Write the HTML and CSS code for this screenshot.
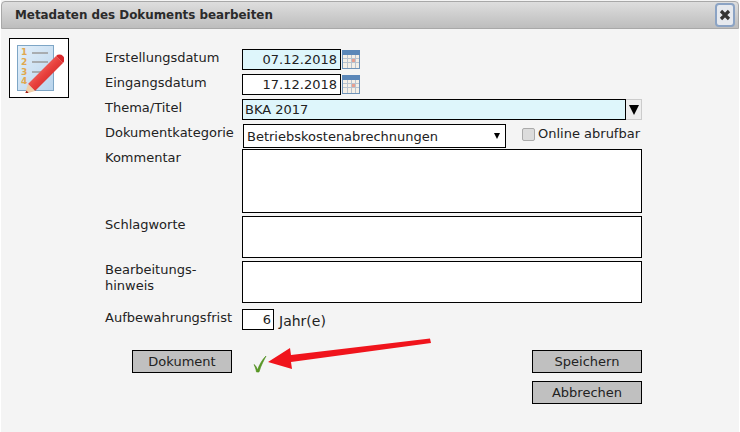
FILE: index.html
```html
<!DOCTYPE html>
<html lang="de">
<head>
<meta charset="utf-8">
<title>Metadaten</title>
<link rel="stylesheet" href="styles.css">
</head>
<body>
<div class="dialog">
  <header class="titlebar">
    <span class="title">Metadaten des Dokuments bearbeiten</span>
    <button class="close" aria-label="Schließen">
      <svg width="12" height="12" viewBox="0 0 12 12"><path d="M2 2l8 8M10 2l-8 8" stroke="#333" stroke-width="3.200" fill="none"/></svg>
    </button>
  </header>
  <div class="content">
    <div class="iconbox">
      <svg width="50" height="50" viewBox="0 0 50 50">
        <defs>
          <linearGradient id="page" x1="0" y1="0" x2="1" y2="1"><stop offset="0" stop-color="#e4f0fa"/><stop offset="1" stop-color="#b9d4ec"/></linearGradient>
          <linearGradient id="pen" x1="0" y1="0" x2="1" y2="1"><stop offset="0" stop-color="#f9a69c"/><stop offset="0.5" stop-color="#e8403c"/><stop offset="1" stop-color="#b8141a"/></linearGradient>
        </defs>
        <rect x="3.500" y="2.500" width="36" height="45" fill="url(#page)" stroke="#7ea6c6"/>
        <text class="nums" x="7" y="12">1</text>
        <text class="nums" x="7" y="22">2</text>
        <text class="nums" x="7" y="32">3</text>
        <text class="nums" x="7" y="41">4</text>
        <path d="M18 10h16M18 19h16M18 29h10M18 38h6" stroke="#9a9a9a" stroke-width="1.600"/>
        <path d="M14 41L42 13l7 7-28 28z" fill="url(#pen)"/>
        <path d="M42 13a4 4 0 0 1 7 7z" fill="#d8262a"/>
        <path d="M14 41l7 7-10 3z" fill="#f0cfa8"/>
        <path d="M12.500 47.500L11 51l3.500-1.200z" fill="#a01818"/>
      </svg>
    </div>
    <form class="form">
      <div class="row r1">
        <label class="lbl">Erstellungsdatum</label>
        <div class="val date tint">07.12.2018</div>
        <svg class="cal" width="20" height="21" viewBox="0 0 20 21"><rect x="1.500" y="1.500" width="17" height="18" fill="#f5efe6" stroke="#6f93b8"/><rect x="1" y="1" width="18" height="5" fill="#5b87b8"/><path d="M2 9.500h16M2 13.500h16M6.500 6v13M10.500 6v13M14.500 6v13" stroke="#b9c3cf"/><path d="M11 10h3v3h-3z" fill="#e8a090"/></svg>
      </div>
      <div class="row r2">
        <label class="lbl">Eingangsdatum</label>
        <div class="val date">17.12.2018</div>
        <svg class="cal" width="20" height="21" viewBox="0 0 20 21"><rect x="1.500" y="1.500" width="17" height="18" fill="#f5efe6" stroke="#6f93b8"/><rect x="1" y="1" width="18" height="5" fill="#5b87b8"/><path d="M2 9.500h16M2 13.500h16M6.500 6v13M10.500 6v13M14.500 6v13" stroke="#b9c3cf"/><path d="M11 10h3v3h-3z" fill="#e8a090"/></svg>
      </div>
      <div class="row r3">
        <label class="lbl">Thema/Titel</label>
        <div class="val theme tint">BKA 2017</div>
        <div class="drop"><span class="tri"></span></div>
      </div>
      <div class="row r4">
        <label class="lbl">Dokumentkategorie</label>
        <div class="val select"><span>Betriebskostenabrechnungen</span><span class="tri small"></span></div>
        <span class="check"></span>
        <span class="online">Online abrufbar</span>
      </div>
      <div class="row r5">
        <label class="lbl">Kommentar</label>
        <div class="val area h64"></div>
      </div>
      <div class="row r6">
        <label class="lbl">Schlagworte</label>
        <div class="val area h42"></div>
      </div>
      <div class="row r7">
        <label class="lbl">Bearbeitungs-<br>hinweis</label>
        <div class="val area h42"></div>
      </div>
      <div class="row r8">
        <label class="lbl">Aufbewahrungsfrist</label>
        <div class="val num">6</div>
        <span class="unit">Jahr(e)</span>
      </div>
      <div class="actions">
        <button type="button" class="btn doc">Dokument</button>
        <svg class="ok" width="14" height="18" viewBox="0 0 14 18"><path d="M1 9.500c1.500 1 2.500 2.500 3.500 5.500C6.500 9.500 9 5 13 1c-2 4-5 9-7 16H3.500C3 14 2 11.500 1 9.500z" fill="#5a9a22" stroke="#4a8a1c" stroke-width="0.600"/></svg>
        <div class="right">
          <button type="button" class="btn wide">Speichern</button>
          <button type="button" class="btn wide">Abbrechen</button>
        </div>
      </div>
    </form>
  </div>
  <svg class="arrow" width="170" height="40" viewBox="0 0 170 40"><path d="M163 2.500L24 19l-1-7L1 26l24 7-1-7L164 7z" fill="#f0141c"/></svg>
</div>
</body>
</html>
```
FILE: styles.css
```css
* { box-sizing: border-box; }
html, body { margin: 0; height: 100%; background: #fff; }
body { font-family: "DejaVu Sans", Verdana, sans-serif; font-size: 13px; color: #222; overflow: hidden; }
.dialog { position: relative; width: 738px; height: 432px; margin-left: 1px; padding-top: 1px; background: #f4f4f4; }
.titlebar { height: 28px; display: flex; align-items: center; justify-content: space-between; padding: 0 3px 0 13px; border: 1px solid #a8a8a8; border-radius: 4px 4px 0 0; background: linear-gradient(#dedede, #bdbdbd); }
.title { font-weight: bold; font-size: 11.900px; color: #2b2b2b; }
.close { width: 20px; height: 24px; padding: 0; display: flex; align-items: center; justify-content: center; background: #e6e9ee; border: 2px solid #8ba3c4; border-radius: 4px; }
.content { display: flex; padding: 9px 0 0 8px; }
.iconbox { width: 60px; height: 60px; border: 1px solid #000; background: #fff; display: flex; align-items: center; justify-content: center; flex: none; }
.nums { font: bold 9px "DejaVu Sans", sans-serif; fill: #e0a850; }
.form { margin: 11px 0 0 36px; width: 537px; }
.row { display: flex; align-items: flex-start; }
.lbl { width: 137px; flex: none; line-height: 16px; padding-top: 1px; }
.val { border: 1px solid #000; background: #fff; }
.tint { background: #def6fb; }
.date { width: 99px; height: 21px; line-height: 20px; text-align: right; padding-right: 3px; }
.cal { flex: none; }
.r2, .r3 { margin-top: 4px; }
.r3 .val { width: 384px; height: 21px; line-height: 20px; padding-left: 2px; }
.drop { width: 16px; height: 21px; background: #eee; border: 1px solid #ccc; border-left: 0; display: flex; align-items: center; justify-content: center; }
.tri { width: 0; height: 0; border-left: 5px solid transparent; border-right: 5px solid transparent; border-top: 10px solid #000; }
.tri.small { border-left-width: 3.500px; border-right-width: 3.500px; border-top-width: 6px; margin-right: 5px; }
.r4 { margin-top: 4px; height: 25px; }
.select { width: 263px; height: 24px; margin-left: 1px; display: flex; align-items: center; justify-content: space-between; padding-left: 3px; }
.check { width: 13px; height: 13px; margin: 4px 3px 0 16px; border: 1px solid #aaa; border-radius: 2px; background: #dcdcdc; flex: none; }
.online { line-height: 20px; white-space: nowrap; }
.r5 { margin-top: 0; }
.r6, .r7 { margin-top: 3px; }
.area { width: 400px; }
.h64 { height: 64px; }
.h42 { height: 42px; }
.r8 { margin-top: 6px; }
.num { width: 32px; height: 21px; line-height: 20px; text-align: right; padding-right: 2px; }
.unit { margin-left: 5px; line-height: 24px; font-size: 14px; }
.actions { display: flex; align-items: flex-start; margin-top: 17px; padding-left: 27px; }
.btn { font: inherit; color: #222; background: #c0c0c0; border: 1px solid #000; height: 23px; padding: 0; }
.doc { width: 100px; }
.ok { margin: 5px 0 0 21px; flex: none; }
.right { margin-left: auto; display: flex; flex-direction: column; gap: 8px; }
.wide { width: 110px; }
.arrow { position: absolute; left: 266px; top: 336px; }
```
